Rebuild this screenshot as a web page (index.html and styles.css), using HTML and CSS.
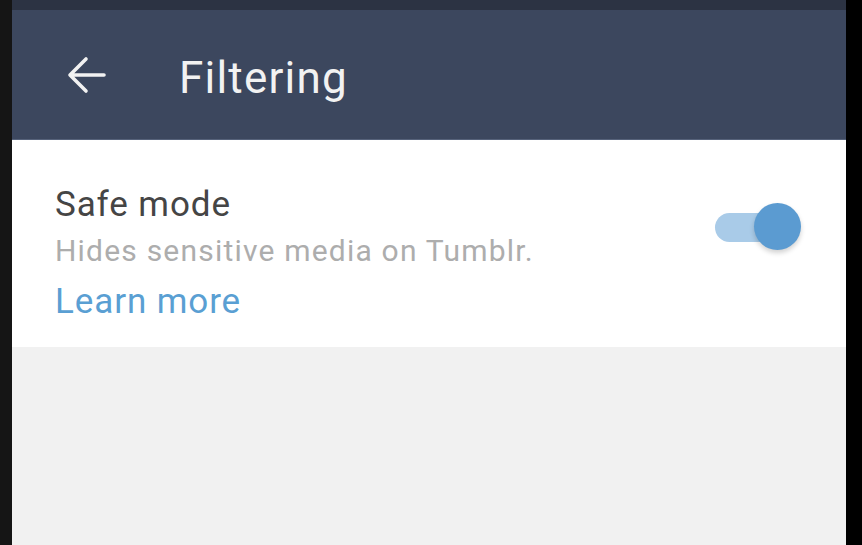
FILE: index.html
```html
<!DOCTYPE html>
<html>
<head>
<meta charset="utf-8">
<link rel="stylesheet" href="styles.css">
</head>
<body>
<div class="frame">
  <div class="edge-left"></div>
  <div class="screen">
    <div class="statusbar"></div>
    <header class="appbar">
      <svg class="back" width="40" height="40" viewBox="0 0 40 40">
        <path d="M37 20 H4 M19 4 L3 20 L19 36" fill="none" stroke="#f2f2f2" stroke-width="3.6" stroke-linecap="round" stroke-linejoin="round"/>
      </svg>
      <h1 class="title">Filtering</h1>
    </header>
    <section class="setting">
      <div class="setting-text">
        <div class="setting-name">Safe mode</div>
        <div class="setting-desc">Hides sensitive media on Tumblr.</div>
        <a class="learn">Learn more</a>
      </div>
      <div class="switch"><span class="track"></span><span class="thumb"></span></div>
    </section>
    <div class="rest"></div>
  </div>
  <div class="edge-right"></div>
</div>
</body>
</html>
```
FILE: styles.css
```css
html, body { margin: 0; padding: 0; }
body { background: #000; font-family: Roboto, "Noto Sans", sans-serif; }
.frame { display: flex; width: 862px; height: 545px; overflow: hidden; }
.edge-left { width: 12px; background: #151515; }
.edge-right { width: 16px; background: #000; }
.screen { width: 834px; display: flex; flex-direction: column; background: #f1f1f1; }
.statusbar { height: 10px; background: #2c3343; }
.appbar { height: 130px; background: #3c475e; display: flex; align-items: center; border-bottom: 1px solid #56627a; box-sizing: border-box; }
.back { margin-left: 55px; margin-top: 0; width: 40px; height: 40px; }
.title { margin: 6px 0 0 72px; color: #f2f2f2; font-weight: 400; font-size: 44px; letter-spacing: 1.2px; line-height: 1; }
.setting { height: 207px; background: #fff; display: flex; align-items: flex-start; padding-left: 43px; box-sizing: border-box; }
.setting-text { padding-top: 45px; display: flex; flex-direction: column; }
.setting-name { font-size: 35px; letter-spacing: 0.9px; color: #454545; line-height: 40px; }
.setting-desc { font-size: 30px; letter-spacing: 1.2px; color: #adadad; line-height: 36px; margin-top: 8px; }
.learn { font-size: 35px; letter-spacing: 0.9px; color: #5a9fd3; line-height: 40px; margin-top: 13px; }
.switch { position: relative; margin-left: auto; margin-right: 45px; margin-top: 63px; width: 86px; height: 48px; }
.track { position: absolute; left: 0; top: 10px; width: 70px; height: 29px; border-radius: 15px; background: #a9cbe8; }
.thumb { position: absolute; right: 0; top: 0; width: 47px; height: 47px; border-radius: 50%; background: #5b9bd1; box-shadow: 0 3px 5px rgba(0,0,0,0.18); }
.rest { flex: 1; background: #f1f1f1; }
```
